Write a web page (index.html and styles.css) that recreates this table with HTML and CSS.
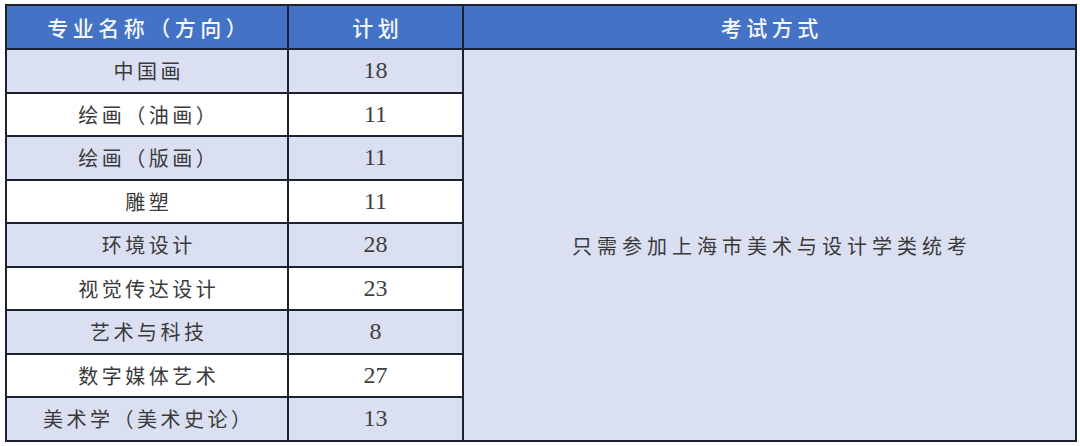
FILE: index.html
```html
<!DOCTYPE html>
<html lang="zh">
<head>
<meta charset="utf-8">
<link rel="stylesheet" href="styles.css">
</head>
<body>
<table class="plan">
  <colgroup>
    <col class="c1">
    <col class="c2">
    <col class="c3">
  </colgroup>
  <thead>
    <tr>
      <th>专业名称（方向）</th>
      <th>计划</th>
      <th>考试方式</th>
    </tr>
  </thead>
  <tbody>
    <tr class="alt"><td>中国画</td><td class="num">18</td><td class="exam" rowspan="9">只需参加上海市美术与设计学类统考</td></tr>
    <tr><td>绘画（油画）</td><td class="num">11</td></tr>
    <tr class="alt"><td>绘画（版画）</td><td class="num">11</td></tr>
    <tr><td>雕塑</td><td class="num">11</td></tr>
    <tr class="alt"><td>环境设计</td><td class="num">28</td></tr>
    <tr><td>视觉传达设计</td><td class="num">23</td></tr>
    <tr class="alt"><td>艺术与科技</td><td class="num">8</td></tr>
    <tr><td>数字媒体艺术</td><td class="num">27</td></tr>
    <tr class="alt"><td>美术学（美术史论）</td><td class="num">13</td></tr>
  </tbody>
</table>
</body>
</html>
```

FILE: styles.css
```css
html, body {
  margin: 0;
  padding: 0;
  background: #ffffff;
}

body {
  padding: 4px 5px 0 5px;
  font-family: "Noto Sans CJK SC", "Noto Sans", sans-serif;
}

.plan {
  width: 1070px;
  border-collapse: collapse;
  table-layout: fixed;
  border: 2px solid #1c2230;
}

.c1 { width: 282px; }
.c2 { width: 175px; }
.c3 { width: 613px; }

.plan th,
.plan td {
  border: 2px solid #1c2230;
  text-align: center;
  vertical-align: middle;
  padding: 0;
}

.plan th {
  height: 42px;
  background: #4472c4;
  color: #f4f7fd;
  font-size: 21px;
  font-weight: 500;
  letter-spacing: 4.5px;
  text-indent: 4.5px;
}

.plan td {
  height: 41.5px;
  font-size: 20px;
  color: #3a3a3a;
  letter-spacing: 3.5px;
  text-indent: 3.5px;
  background: #ffffff;
}

.plan tr.alt td {
  background: #dae0f1;
}

.plan td.num {
  font-family: "Liberation Serif", "Times New Roman", serif;
  font-size: 24px;
  color: #404040;
  letter-spacing: 0;
  text-indent: 0;
}

.plan td.exam,
.plan tr.alt td.exam {
  background: #dae0f1;
  letter-spacing: 5px;
  text-indent: 5px;
  padding-top: 2px;
}
```
